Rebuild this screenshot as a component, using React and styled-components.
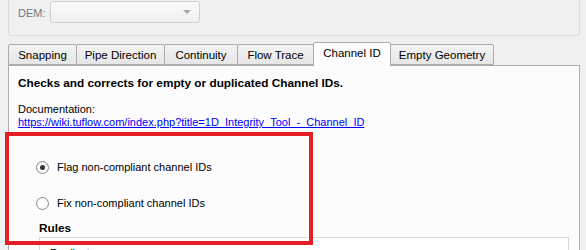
import React from 'react'
import styled, { createGlobalStyle } from 'styled-components'

const GlobalStyle = createGlobalStyle`
  html, body {
    margin: 0;
    padding: 0;
    background: #f0f0f0;
  }
  body {
    font-family: "Liberation Sans", Arial, sans-serif;
    font-size: 11px;
    color: #000;
  }
`

const tabs = [
  { label: 'Snapping', width: 69 },
  { label: 'Pipe Direction', width: 89 },
  { label: 'Continuity', width: 74 },
  { label: 'Flow Trace', width: 77 },
  { label: 'Channel ID', width: 78 },
  { label: 'Empty Geometry', width: 104 },
]

const App = () => {
  return (
    <Page>
      <GlobalStyle />
      <GroupBox>
        <FieldLabel>DEM:</FieldLabel>
        <Combo>
          <ComboArrow />
        </Combo>
      </GroupBox>

      <TabBar>
        {tabs.map((t) => (
          <Tab key={t.label} $width={t.width} $active={t.label === 'Channel ID'}>
            {t.label}
          </Tab>
        ))}
      </TabBar>

      <Pane>
        <Title>Checks and corrects for empty or duplicated Channel IDs.</Title>
        <DocBlock>
          <div>Documentation:</div>
          <DocLink href="#">https://wiki.tuflow.com/index.php?title=1D_Integrity_Tool_-_Channel_ID</DocLink>
        </DocBlock>

        <RadioList>
          <RadioRow>
            <Radio $checked />
            <span>Flag non-compliant channel IDs</span>
          </RadioRow>
          <RadioRow>
            <Radio />
            <span>Fix non-compliant channel IDs</span>
          </RadioRow>
        </RadioList>

        <RulesSection>
          <Title>Rules</Title>
          <RulesBox>
            <RuleItem>Duplicates</RuleItem>
          </RulesBox>
        </RulesSection>
      </Pane>

      <Highlight />
    </Page>
  )
}

export default App

const Page = styled.div`
  position: relative;
  width: 572px;
  padding-left: 8px;
  height: 250px;
  overflow: hidden;
`

const GroupBox = styled.div`
  box-sizing: border-box;
  height: 36px;
  border: 1px solid #dcdcdc;
  border-top: none;
  border-radius: 0 0 3px 3px;
  display: flex;
  align-items: center;
  padding: 0 0 11px 9px;
`

const FieldLabel = styled.span`
  color: #707986;
  width: 32px;
  padding-top: 2px;
`

const Combo = styled.div`
  position: relative;
  box-sizing: border-box;
  width: 150px;
  height: 22px;
  border: 1px solid #cfcfcf;
  border-radius: 3px;
  background: linear-gradient(#fbfbfb, #f0f0f0);
`

const ComboArrow = styled.span`
  position: absolute;
  right: 8px;
  top: 8px;
  width: 0;
  height: 0;
  border-left: 4px solid transparent;
  border-right: 4px solid transparent;
  border-top: 4px solid #a6a6a6;
`

const TabBar = styled.div`
  display: flex;
  align-items: flex-end;
  height: 23px;
  margin-top: 6px;
  position: relative;
  z-index: 1;
`

const Tab = styled.div`
  box-sizing: border-box;
  width: ${(p) => p.$width}px;
  height: ${(p) => (p.$active ? 24 : 21)}px;
  margin-right: -1px;
  margin-bottom: ${(p) => (p.$active ? -1 : 0)}px;
  border: 1px solid #acacac;
  border-bottom: ${(p) => (p.$active ? 'none' : '1px solid #acacac')};
  border-radius: 2px 2px 0 0;
  background: ${(p) => (p.$active ? '#fcfcfc' : 'linear-gradient(#f3f3f3, #e6e6e6)')};
  display: flex;
  align-items: center;
  justify-content: center;
  font-size: 11.5px;
  padding-bottom: ${(p) => (p.$active ? 3 : 0)}px;
  position: relative;
  z-index: ${(p) => (p.$active ? 2 : 0)};
`

const Pane = styled.div`
  box-sizing: border-box;
  height: 300px;
  border: 1px solid #acacac;
  background: #fcfcfc;
  padding: 10px 10px 0 9px;
`

const Title = styled.div`
  font-weight: bold;
  font-size: 11.8px;
  line-height: 15px;
`

const DocBlock = styled.div`
  margin-top: 12px;
  line-height: 13px;
`

const DocLink = styled.a`
  color: #0000ff;
  text-decoration: underline;
`

const RadioList = styled.div`
  display: flex;
  flex-direction: column;
  gap: 16px;
  margin: 28px 0 8px 18px;
`

const RadioRow = styled.label`
  display: flex;
  align-items: center;
  gap: 8px;
  height: 20px;
`

const Radio = styled.span`
  box-sizing: border-box;
  width: 13px;
  height: 13px;
  border-radius: 50%;
  border: 1px solid #8c8c8c;
  background: radial-gradient(circle, #ffffff 40%, #ececec 100%);
  display: flex;
  align-items: center;
  justify-content: center;
  &::after {
    content: '';
    display: ${(p) => (p.$checked ? 'block' : 'none')};
    width: 5px;
    height: 5px;
    border-radius: 50%;
    background: #333;
  }
`

const RulesSection = styled.div`
  margin-left: 21px;
`

const RulesBox = styled.div`
  margin-top: 1px;
  border: 1px solid #d9d9d9;
  background: #ffffff;
  padding: 8px 10px;
`

const RuleItem = styled.div`
  line-height: 14px;
`

const Highlight = styled.div`
  position: absolute;
  left: 5px;
  top: 132px;
  width: 308px;
  height: 113px;
  box-sizing: border-box;
  border: 4px solid #e51d24;
  pointer-events: none;
`
